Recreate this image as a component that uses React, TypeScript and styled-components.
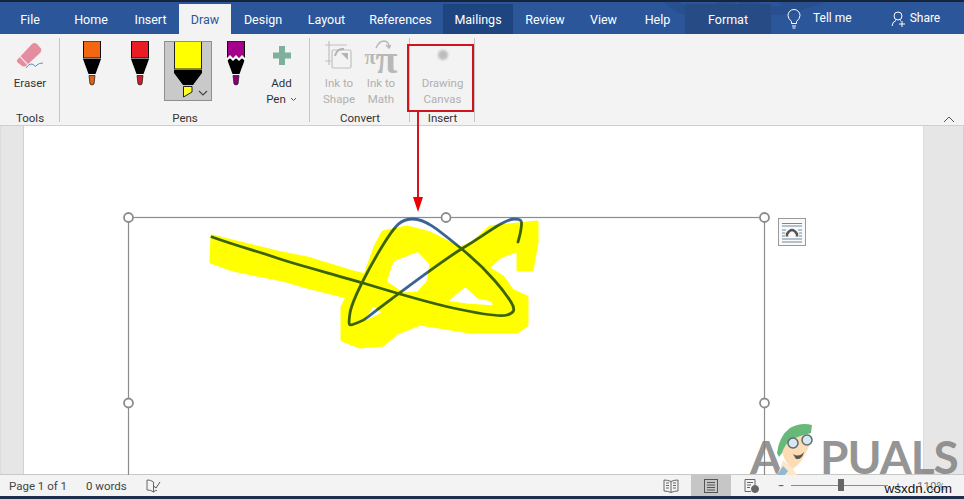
import * as React from 'react';
import styled, { createGlobalStyle } from 'styled-components';

const UI_FONT = 'Roboto, "Noto Sans", "Liberation Sans", sans-serif';

const GlobalStyle = createGlobalStyle`
  html, body {
    margin: 0;
    padding: 0;
    background: #f3f3f3;
  }
  body {
    font-family: ${UI_FONT};
    overflow: hidden;
  }
`;

const tabs = [
  { label: 'File', width: 60 },
  { label: 'Home', width: 62 },
  { label: 'Insert', width: 57 },
  { label: 'Draw', width: 52, state: 'active' },
  { label: 'Design', width: 64 },
  { label: 'Layout', width: 63 },
  { label: 'References', width: 85 },
  { label: 'Mailings', width: 70, state: 'dark' },
  { label: 'Review', width: 64 },
  { label: 'View', width: 53 },
  { label: 'Help', width: 55 },
  { label: 'Format', width: 86, state: 'format' },
];

const handles = [
  [128.5, 217.5],
  [446, 217.5],
  [764.5, 217.5],
  [128.5, 403],
  [764.5, 403],
];

const Pen = ({ body, tip, zig }: { body: string; tip: string; zig?: boolean }) => (
  <svg width="22" height="45" viewBox="0 0 22 45">
    <rect x="2.5" y="0" width="17" height="17" fill={body} stroke="#111" strokeWidth="1" />
    <path d="M2 18H20L14.5 33H7.5Z" fill="#000" />
    {zig && <path d="M2 17L5 14L8 17L11 14L14 17L17 14L20 17V20L17 17L14 20L11 17L8 20L5 17L2 20Z" fill="#fff" />}
    <path d="M8 34.5H14L13 43Q11 45 9 43Z" fill={tip} stroke="#111" strokeWidth="0.7" />
  </svg>
);

const Highlighter = () => (
  <svg width="28" height="56" viewBox="0 0 28 56">
    <rect x="0.5" y="-1" width="27" height="28" fill="#ffff00" stroke="#222" strokeWidth="1" />
    <path d="M0 28H28V31L19 43H9L0 31Z" fill="#000" />
    <path d="M9.500 44.500H18V50L9.500 55Z" fill="#ffff20" stroke="#222" strokeWidth="1" />
  </svg>
);

export default function App() {
  return (
    <Window>
      <GlobalStyle />
      <TabBar>
        <TitleArt viewBox="0 0 300 34" width="300" height="34">
          <path d="M60 -6Q90 26 130 -4M130 -8Q170 24 215 -6M170 -8Q195 12 225 -8" fill="none" stroke="#284f8e" strokeWidth="9" />
        </TitleArt>
        {tabs.map((t) => (
          <Tab key={t.label} $width={t.width} $state={t.state}>
            {t.label}
          </Tab>
        ))}
        <Assist>
          <svg width="14" height="20" viewBox="0 0 14 20" fill="none" stroke="#fff" strokeWidth="1">
            <path d="M4.5 14.5V12.5Q1 9.5 1 6.5A6 6 0 0 1 13 6.5Q13 9.5 9.5 12.5V14.5Z" />
            <path d="M5 17H9M5.5 19H8.5" />
          </svg>
          <AssistText $left={12} $right={39}>Tell me</AssistText>
          <svg width="15" height="16" viewBox="0 0 15 16" fill="none" stroke="#fff" strokeWidth="1">
            <circle cx="7" cy="5" r="4" />
            <path d="M1 15Q1.5 10.5 5 9.500M9 9.500L10 10M11 10V16M8 13H14" />
          </svg>
          <AssistText $left={4} $right={0}>Share</AssistText>
        </Assist>
      </TabBar>

      <Ribbon>
        <Group $width={60}>
          <GroupBody>
            <ToolButton $width={60}>
              <ToolIcon>
                <svg width="30" height="30" viewBox="0 0 30 30">
                  <path d="M2 19L17 3Q19.500 1 22 3L26 7.500Q27 10 25 12L11 25Q9 26 7 25L2 21Z" fill="#e58da0" />
                  <path d="M5 15.500L13 24" stroke="#f8e3e8" strokeWidth="1.200" />
                  <path d="M11 27Q15 21 19 24Q20 27 22 24Q24 22 28 22" fill="none" stroke="#4f86b8" strokeWidth="0.900" />
                </svg>
              </ToolIcon>
              <ToolLabel>Eraser</ToolLabel>
            </ToolButton>
          </GroupBody>
          <GroupLabel>Tools</GroupLabel>
        </Group>

        <Group $width={250}>
          <GroupBody $pad={8}>
            <PenSlot>
              <Pen body="#f4660f" tip="#d9661a" />
            </PenSlot>
            <PenSlot>
              <Pen body="#ec1c24" tip="#cc2027" />
            </PenSlot>
            <PenSlot $selected>
              <Highlighter />
              <PenChevron width="10" height="6" viewBox="0 0 10 6">
                <path d="M1 1L5 5L9 1" fill="none" stroke="#444" strokeWidth="1.200" />
              </PenChevron>
            </PenSlot>
            <PenSlot>
              <Pen body="#a5008c" tip="#8c0078" zig />
            </PenSlot>
            <ToolButton $width={43}>
              <ToolIcon>
                <svg width="20" height="30" viewBox="0 0 20 30">
                  <path d="M7 5H13V11.500H19V17.500H13V24H7V17.500H1V11.500H7Z" fill="#7fb09d" />
                </svg>
              </ToolIcon>
              <ToolLabel>Add</ToolLabel>
              <ToolLabel>
                Pen
                <svg width="7" height="5" viewBox="0 0 7 5">
                  <path d="M1 1L3.500 3.500L6 1" fill="none" stroke="#555" strokeWidth="1" />
                </svg>
              </ToolLabel>
            </ToolButton>
          </GroupBody>
          <GroupLabel>Pens</GroupLabel>
        </Group>

        <Group $width={100}>
          <GroupBody $pad={8}>
            <ToolButton $width={42} $muted>
              <ToolIcon>
                <svg width="30" height="30" viewBox="0 0 30 30" fill="none" stroke="#c0c0c0" strokeWidth="1.200">
                  <path d="M1 4H23M5 0V24M1 20H7" />
                  <rect x="8" y="9" width="19" height="18" rx="1.500" />
                  <path d="M11 15Q13 7 20 8" strokeWidth="2" stroke="#b4b4b4" />
                  <path d="M17 12H24V19Z" fill="#b4b4b4" stroke="none" />
                </svg>
              </ToolIcon>
              <ToolLabel>Ink to</ToolLabel>
              <ToolLabel>Shape</ToolLabel>
            </ToolButton>
            <ToolButton $width={42} $muted>
              <ToolIcon>
                <MathGlyph>
                  <small>π</small>π
                  <MathArrow width="16" height="10" viewBox="0 0 16 10" fill="none" stroke="#b8b8b8" strokeWidth="1.500">
                    <path d="M1 8Q4 1 9 1Q14 1 14 8M11 5L14 8L16 5" />
                  </MathArrow>
                </MathGlyph>
              </ToolIcon>
              <ToolLabel>Ink to</ToolLabel>
              <ToolLabel>Math</ToolLabel>
            </ToolButton>
          </GroupBody>
          <GroupLabel>Convert</GroupLabel>
        </Group>

        <Group $width={65}>
          <GroupBody>
            <ToolButton $width={65} $muted>
              <ToolIcon>
                <CanvasDot />
              </ToolIcon>
              <ToolLabel>Drawing</ToolLabel>
              <ToolLabel>Canvas</ToolLabel>
            </ToolButton>
          </GroupBody>
          <GroupLabel>Insert</GroupLabel>
        </Group>

        <Collapse width="12" height="7" viewBox="0 0 12 7">
          <path d="M1 6L6 1L11 6" fill="none" stroke="#555" strokeWidth="1" />
        </Collapse>
      </Ribbon>

      <DocArea>
        <Gutter $width={24} />
        <Page />
        <Gutter $width={41} />
        <LayoutOptions>
          <svg width="28" height="28" viewBox="0 0 28 28">
            <rect x="0.500" y="0.500" width="27" height="27" fill="#f9f9f9" stroke="#9a9a9a" />
            <path d="M4 5.500H24M4 8H24M4 12H8M20 12H24M4 15H7M21 15H24M4 18H7M21 18H24M4 21H24M4 24H24" stroke="#6d8c9c" strokeWidth="1" />
            <path d="M9 18.500V16Q14 8 19 16V18.500" fill="none" stroke="#555" strokeWidth="2.500" />
          </svg>
        </LayoutOptions>
      </DocArea>

      <StatusBar>
        <StatusText $width={77}>Page 1 of 1</StatusText>
        <StatusText $width={60}>0 words</StatusText>
        <svg width="15" height="14" viewBox="0 0 15 14" fill="none" stroke="#666" strokeWidth="1">
          <path d="M7.500 3Q4 0.500 1 1V11Q4 10.500 7.500 13V3M7.500 13Q9 11.500 11 11.200" />
          <path d="M7.500 7L10 9L14 3" stroke="#555" />
        </svg>
        <StatusRight>
          <ViewButton>
            <svg width="16" height="14" viewBox="0 0 16 14" fill="none" stroke="#666" strokeWidth="1">
              <path d="M8 2.500Q5 1 1 1V12Q5 12 8 13.500Q11 12 15 12V1Q11 1 8 2.500V13.500M3 4H6M3 6.500H6M3 9H6M10 4H13M10 6.500H13M10 9H13" />
            </svg>
          </ViewButton>
          <ViewButton $selected>
            <svg width="14" height="14" viewBox="0 0 14 14" fill="none" stroke="#555" strokeWidth="1">
              <rect x="0.500" y="0.500" width="13" height="13" />
              <path d="M3 3.500H11M3 6H11M3 8.500H11M3 11H11" />
            </svg>
          </ViewButton>
          <ViewButton>
            <svg width="15" height="14" viewBox="0 0 15 14" fill="none" stroke="#666" strokeWidth="1">
              <path d="M7 12.500H1V0.500H11V6M3 3.500H9M3 6H7M3 8.500H6" />
              <circle cx="11" cy="10" r="3.500" fill="#666" />
            </svg>
          </ViewButton>
          <ZoomControl>
            <ZoomSign>−</ZoomSign>
            <ZoomTrack>
              <ZoomThumb />
            </ZoomTrack>
            <ZoomSign>+</ZoomSign>
            <ZoomValue>110%</ZoomValue>
          </ZoomControl>
        </StatusRight>
      </StatusBar>

      <Scribble viewBox="0 0 964 499" width="964" height="499">
        <rect x="128.500" y="217.500" width="636" height="300" fill="none" stroke="#8c8c8c" strokeWidth="1.200" />
        <path
          d="M212 237C240 247 260 252 277 258S340 276 363 283S430 303 453 308S500 317 507 315S516 310 511 302S490 272 463 250S425 219 413 219S396 224 383 245S352 300 350 313S349 326 354 324S362 322 368 317S440 262 463 248S505 219 514 219S522 222 521 229S519 238 518 242"
          fill="none"
          stroke="#3b6396"
          strokeWidth="2.800"
          strokeLinecap="round"
        />
        <HighlightInk
          fillRule="evenodd"
          d="M212 236L277 252L307 258L353 272L365 275L375 247L383 232L407 227L430 233L460 248L473 242L490 227L537 222L537 243L532 270L518 270L518 250L500 257L488 268L503 277L512 290L527 297L527 325L517 332L470 332L420 324L397 333L383 345L360 347L342 340L342 307L347 297L307 287L283 280L257 275L233 270L211 262Z
          M393 260L418 250L431 264L428 282L418 293L403 294L385 282L390 267Z
          M445 302L465 285L478 297L492 300L495 307L467 305Z
          M361 324L373 304L384 313Z"
        />
        {handles.map(([cx, cy]) => (
          <circle key={cx + '-' + cy} cx={cx} cy={cy} r="4.500" fill="#fff" stroke="#8c8c8c" strokeWidth="1.800" />
        ))}
      </Scribble>

      <Callout />
      <Arrow width="12" height="101" viewBox="0 0 12 101">
        <path d="M6 0V88" stroke="#d7141f" strokeWidth="2" />
        <path d="M1 85H11L6 100Z" fill="#f00000" />
      </Arrow>

      <Watermark>
        <WatermarkLetter>A</WatermarkLetter>
        <Mascot width="44" height="59" viewBox="0 0 44 59">
          <path d="M8 44L18 53L22 59H2L6 50Z" fill="#fde7c8" />
          <path d="M2 59L8 50L13 55L10 59Z" fill="#8fb8d4" />
          <path d="M7 36L10 44Q14 50 18 53Q27 46 30 38Q36 30 35 18Q24 20 15 24Q9 30 7 36Z" fill="#fbdcb4" />
          <path d="M2 37Q4 20 15 12Q26 6 37 9L36 17Q24 20 15 24Q9 30 7 37L4 41Z" fill="#66b978" />
          <circle cx="18" cy="27" r="5" fill="#d8e8f0" stroke="#5d6a74" strokeWidth="1.500" />
          <circle cx="32" cy="24" r="5" fill="#d8e8f0" stroke="#5d6a74" strokeWidth="1.500" />
          <path d="M18 38Q24 42 29 36Q27 44 21 43Z" fill="#555" />
        </Mascot>
        <WatermarkLetter>PUALS</WatermarkLetter>
      </Watermark>
      <SiteMark>wsxdn.com</SiteMark>
    </Window>
  );
}

const Window = styled.div`
  position: relative;
  width: 964px;
  height: 499px;
  display: flex;
  flex-direction: column;
  overflow: hidden;
  background: #f3f3f3;
  border-top: 2px solid #16243c;
  border-bottom: 3px solid #1d2f4d;
  box-sizing: border-box;
`;

const TabBar = styled.div`
  position: relative;
  flex: 0 0 32px;
  display: flex;
  align-items: flex-end;
  background: #2b579a;
`;

const TitleArt = styled.svg`
  position: absolute;
  top: 0;
  right: 60px;
`;

const Tab = styled.div<{ $width: number; $state?: string }>`
  position: relative;
  width: ${({ $width }) => $width}px;
  height: 30px;
  display: flex;
  align-items: center;
  justify-content: center;
  font-size: 12.5px;
  color: ${({ $state }) => ($state === 'active' ? '#2b579a' : '#fff')};
  background: ${({ $state }) =>
    $state === 'active'
      ? '#f3f3f3'
      : $state === 'dark'
        ? '#1f4580'
        : $state === 'format'
          ? '#264b85'
          : 'transparent'};
`;

const Assist = styled.div`
  position: relative;
  flex: 1;
  height: 30px;
  display: flex;
  align-items: center;
  padding-left: 16px;
  color: #fff;
  font-size: 12px;
`;

const AssistText = styled.span<{ $left: number; $right: number }>`
  margin-left: ${({ $left }) => $left}px;
  margin-right: ${({ $right }) => $right}px;
  margin-top: -2px;
`;

const Ribbon = styled.div`
  position: relative;
  flex: 0 0 92px;
  display: flex;
  box-sizing: border-box;
  background: #f3f3f3;
  border-bottom: 1px solid #cfcfcf;
`;

const Group = styled.div<{ $width: number }>`
  position: relative;
  width: ${({ $width }) => $width}px;
  box-sizing: border-box;
  display: flex;
  flex-direction: column;
  &::after {
    content: '';
    position: absolute;
    top: 4px;
    bottom: 3px;
    right: 0;
    width: 1px;
    background: #c4c4c4;
  }
`;

const GroupBody = styled.div<{ $pad?: number }>`
  flex: 1;
  display: flex;
  align-items: flex-start;
  padding: 7px 0 0 ${({ $pad }) => $pad ?? 0}px;
`;

const GroupLabel = styled.div`
  height: 15px;
  text-align: center;
  font-size: 11.5px;
  line-height: 17px;
  color: #333;
`;

const ToolButton = styled.div<{ $width: number; $muted?: boolean }>`
  width: ${({ $width }) => $width}px;
  display: flex;
  flex-direction: column;
  align-items: center;
  color: ${({ $muted }) => ($muted ? '#b0b0b0' : '#333')};
`;

const ToolIcon = styled.div`
  height: 34px;
  display: flex;
  justify-content: center;
  align-items: flex-start;
`;

const ToolLabel = styled.div`
  display: flex;
  align-items: center;
  gap: 4px;
  height: 16px;
  font-size: 11.5px;
  line-height: 16px;
  white-space: nowrap;
`;

const PenSlot = styled.div<{ $selected?: boolean }>`
  position: relative;
  width: 48px;
  height: 60px;
  box-sizing: border-box;
  display: flex;
  justify-content: center;
  background: ${({ $selected }) => ($selected ? '#c9c9c9' : 'transparent')};
  border: 1px solid ${({ $selected }) => ($selected ? '#8f8f8f' : 'transparent')};
  border-top-width: ${({ $selected }) => ($selected ? 1 : 0)}px;
`;

const PenChevron = styled.svg`
  position: absolute;
  right: 3px;
  bottom: 4px;
`;

const MathGlyph = styled.div`
  position: relative;
  color: #b8b8b8;
  font-family: 'Liberation Serif', serif;
  font-weight: 700;
  font-size: 40px;
  line-height: 36px;
  margin-top: -2px;
  white-space: nowrap;
  small {
    font-size: 20px;
    vertical-align: 9px;
  }
`;

const MathArrow = styled.svg`
  position: absolute;
  left: 10px;
  top: 1px;
`;

const CanvasDot = styled.div`
  width: 10px;
  height: 10px;
  margin-top: 9px;
  border-radius: 50%;
  background: #bdbdbd;
  filter: blur(1px);
`;

const Collapse = styled.svg`
  position: absolute;
  right: 9px;
  bottom: 2px;
`;

const DocArea = styled.div`
  position: relative;
  flex: 1;
  display: flex;
`;

const Gutter = styled.div<{ $width: number }>`
  flex: 0 0 ${({ $width }) => $width}px;
  box-sizing: border-box;
  background: #e6e6e6;
  border-left: 1px solid #dcdcdc;
  border-right: 1px solid #d2d2d2;
`;

const Page = styled.div`
  flex: 1;
  background: #fff;
`;

const LayoutOptions = styled.div`
  position: absolute;
  left: 778px;
  top: 92px;
  line-height: 0;
`;

const StatusBar = styled.div`
  flex: 0 0 22px;
  display: flex;
  align-items: center;
  box-sizing: border-box;
  padding-left: 9px;
  background: #f3f3f3;
  border-top: 1px solid #c8c8c8;
  color: #444;
`;

const StatusText = styled.div<{ $width: number }>`
  width: ${({ $width }) => $width}px;
  font-size: 11.5px;
  white-space: nowrap;
`;

const StatusRight = styled.div`
  display: flex;
  align-items: center;
  height: 100%;
  margin-left: auto;
`;

const ViewButton = styled.div<{ $selected?: boolean }>`
  width: 40px;
  height: 100%;
  display: flex;
  align-items: center;
  justify-content: center;
  background: ${({ $selected }) => ($selected ? '#c6c6c6' : 'transparent')};
`;

const ZoomControl = styled.div`
  display: flex;
  align-items: center;
  width: 193px;
  box-sizing: border-box;
  font-size: 11.5px;
  color: #777;
`;

const ZoomSign = styled.span`
  width: 20px;
  text-align: center;
  color: #444;
`;

const ZoomTrack = styled.div`
  position: relative;
  width: 97px;
  height: 1px;
  background: #8a8a8a;
`;

const ZoomThumb = styled.div`
  position: absolute;
  left: 47px;
  top: -6px;
  width: 6px;
  height: 12px;
  background: #666;
`;

const ZoomValue = styled.span`
  margin-left: 9px;
`;

const Scribble = styled.svg`
  position: absolute;
  left: 0;
  top: -2px;
  pointer-events: none;
  clip-path: inset(0 0 24px 0);
`;

const HighlightInk = styled.path`
  fill: #ffff00;
  stroke: #ffff00;
  stroke-width: 3;
  stroke-linejoin: round;
  mix-blend-mode: multiply;
`;

const Callout = styled.div`
  position: absolute;
  left: 407px;
  top: 42px;
  width: 67px;
  height: 68px;
  box-sizing: border-box;
  border: 2px solid #d0141f;
`;

const Arrow = styled.svg`
  position: absolute;
  left: 412px;
  top: 110px;
`;

const Watermark = styled.div`
  position: absolute;
  left: 750px;
  top: 414px;
  height: 59px;
  display: flex;
  align-items: flex-end;
`;

const Mascot = styled.svg`
  flex: none;
  margin-left: -6px;
  margin-right: 1px;
`;

const WatermarkLetter = styled.span`
  font-family: Lato, 'Open Sans', sans-serif;
  font-weight: 700;
  font-size: 46px;
  line-height: 36px;
  letter-spacing: -1px;
  color: rgba(130, 130, 130, 0.85);
`;

const SiteMark = styled.div`
  position: absolute;
  right: 12px;
  bottom: 0px;
  font-family: 'Liberation Sans', sans-serif;
  font-size: 13.5px;
  color: #111;
  text-shadow: 0 0 2px #fff;
`;
